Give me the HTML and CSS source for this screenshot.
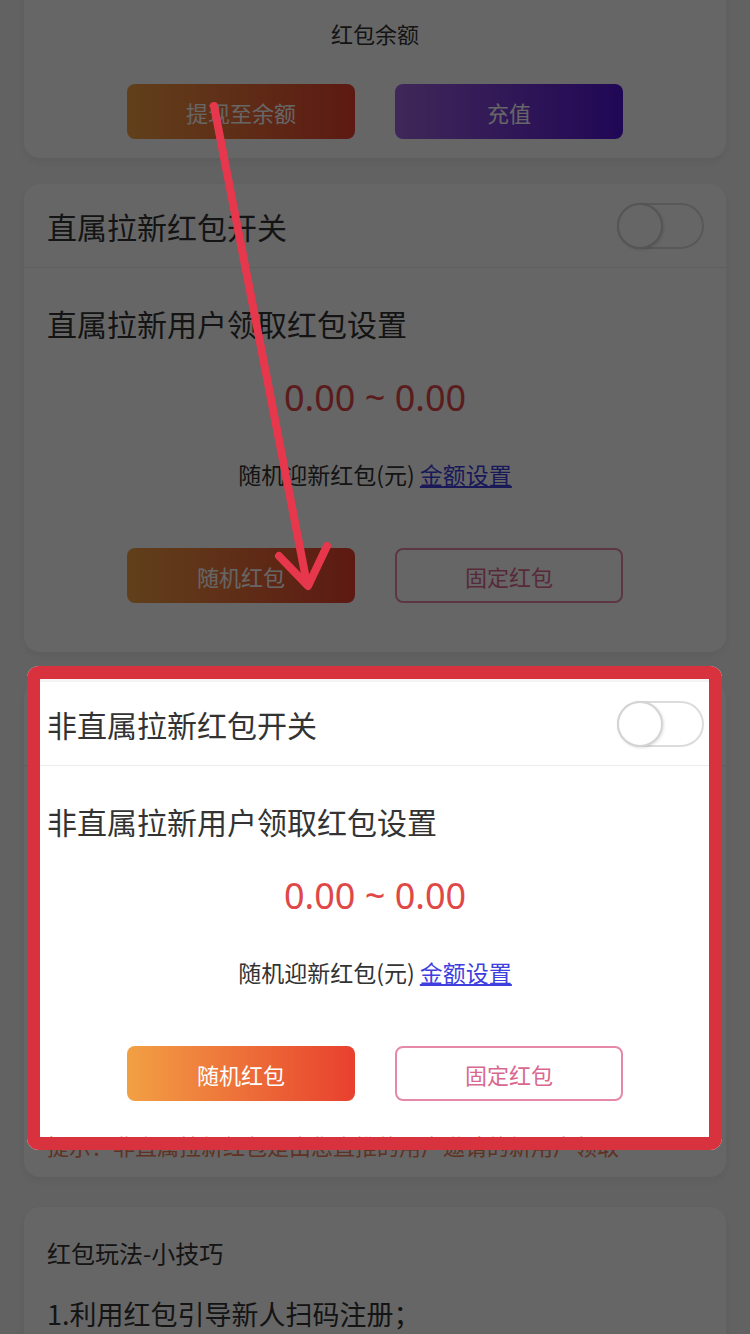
FILE: index.html
```html
<!DOCTYPE html>
<html lang="zh-CN">
<head>
<meta charset="utf-8">
<title>红包设置</title>
<link rel="stylesheet" href="styles.css">
</head>
<body>
<div class="screen">
  <div class="page">
    <section class="card card-balance">
      <div class="balance-title">红包余额</div>
      <div class="btn-row">
        <div class="btn btn-orange">提现至余额</div>
        <div class="btn btn-purple">充值</div>
      </div>
    </section>

    <section class="card">
      <div class="switch-row">
        <span class="row-title">直属拉新红包开关</span>
        <span class="toggle"><span class="knob"></span></span>
      </div>
      <div class="setting">
        <div class="row-title">直属拉新用户领取红包设置</div>
        <div class="amount">0.00 ~ 0.00</div>
        <div class="note">随机迎新红包(元) <span class="link">金额设置</span></div>
        <div class="btn-row btn-row-setting">
          <div class="btn btn-orange">随机红包</div>
          <div class="btn btn-outline">固定红包</div>
        </div>
      </div>
    </section>

    <section class="card">
      <div class="switch-row">
        <span class="row-title">非直属拉新红包开关</span>
        <span class="toggle"><span class="knob"></span></span>
      </div>
      <div class="setting">
        <div class="row-title">非直属拉新用户领取红包设置</div>
        <div class="amount">0.00 ~ 0.00</div>
        <div class="note">随机迎新红包(元) <span class="link">金额设置</span></div>
        <div class="btn-row btn-row-setting">
          <div class="btn btn-orange">随机红包</div>
          <div class="btn btn-outline">固定红包</div>
        </div>
        <div class="tip">提示：非直属拉新红包是由您直推的用户邀请的新用户领取</div>
      </div>
    </section>

    <section class="card card-tips">
      <div class="tips-title">红包玩法-小技巧</div>
      <div class="tips-item">1.利用红包引导新人扫码注册；</div>
    </section>
  </div>

  <div class="spotlight"></div>

  <svg class="arrow" width="750" height="1334" viewBox="0 0 750 1334">
    <g fill="none" stroke="#e6374c" stroke-width="8" stroke-linecap="round" stroke-linejoin="round">
      <line x1="214" y1="106" x2="307" y2="584"/>
      <polyline points="279,556 308,586 327,546"/>
    </g>
  </svg>
</div>
</body>
</html>
```

FILE: styles.css
```css
html, body {
  margin: 0;
  padding: 0;
}

body {
  background: #f5f5f5;
  font-family: "Noto Sans CJK SC", "Noto Sans", sans-serif;
  color: #333;
}

.screen {
  position: relative;
  width: 750px;
  height: 1334px;
  overflow: hidden;
}

.page {
  padding: 0 24px;
}

.card {
  background: #fff;
  border-radius: 16px;
  box-shadow: 0 4px 10px rgba(0, 0, 0, 0.06);
  margin-bottom: 30px;
}

.card-balance {
  margin-top: -30px;
  padding-top: 48px;
  padding-bottom: 19px;
  margin-bottom: 26px;
}

.balance-title {
  text-align: center;
  font-size: 22px;
  line-height: 30px;
  color: #333;
}

.btn-row {
  display: flex;
  justify-content: center;
  gap: 40px;
}

.card-balance .btn-row {
  margin-top: 36px;
}

.btn {
  box-sizing: border-box;
  width: 228px;
  height: 55px;
  border-radius: 8px;
  display: flex;
  align-items: center;
  justify-content: center;
  font-size: 22px;
  color: #fff;
}

.btn-orange {
  background: linear-gradient(90deg, #f2a044 0%, #e8402e 100%);
}

.btn-purple {
  background: linear-gradient(90deg, #a063de 0%, #5213d6 100%);
}

.btn-outline {
  background: #fff;
  border: 2px solid #e689a8;
  color: #d9688f;
}

.switch-row {
  height: 84px;
  box-sizing: border-box;
  display: flex;
  align-items: center;
  justify-content: space-between;
  padding: 0 22px 0 23px;
  border-bottom: 1px solid #ececec;
}

.row-title {
  font-size: 30px;
  line-height: 36px;
  color: #333;
}

.toggle {
  box-sizing: border-box;
  width: 87px;
  height: 46px;
  border-radius: 23px;
  border: 2px solid #dcdcdc;
  background: #fff;
  position: relative;
  display: block;
}

.knob {
  position: absolute;
  left: -2px;
  top: -2px;
  box-sizing: border-box;
  width: 46px;
  height: 46px;
  border-radius: 50%;
  background: #fff;
  border: 2px solid #d4d4d4;
  box-shadow: 1px 1px 3px rgba(0, 0, 0, 0.12);
}

.setting {
  padding: 37px 23px 49px;
}

.amount {
  margin-top: 35px;
  text-align: center;
  font-family: "Noto Sans", Roboto, sans-serif;
  font-size: 36px;
  line-height: 44px;
  color: #e04848;
}

.note {
  margin-top: 39px;
  text-align: center;
  font-size: 23px;
  line-height: 30px;
  color: #333;
}

.link {
  color: #3f3fe0;
  text-decoration: underline;
}

.btn-row-setting {
  margin-top: 59px;
}

.tip {
  margin-top: 29px;
  margin-bottom: -32px;
  font-size: 22px;
  line-height: 30px;
  color: #f27a55;
  white-space: nowrap;
  overflow: hidden;
}

.card-tips {
  padding: 30px 23px 20px;
}

.tips-title {
  font-size: 24px;
  line-height: 32px;
  color: #333;
}

.tips-item {
  margin-top: 28px;
  font-size: 27px;
  line-height: 34px;
  color: #333;
}

.spotlight {
  position: absolute;
  left: 27px;
  top: 666px;
  width: 695px;
  height: 484px;
  box-sizing: border-box;
  border: 13px solid #d8323f;
  border-radius: 12px;
  box-shadow: 0 0 0 3000px rgba(0, 0, 0, 0.6);
}

.arrow {
  position: absolute;
  left: 0;
  top: 0;
}
```
